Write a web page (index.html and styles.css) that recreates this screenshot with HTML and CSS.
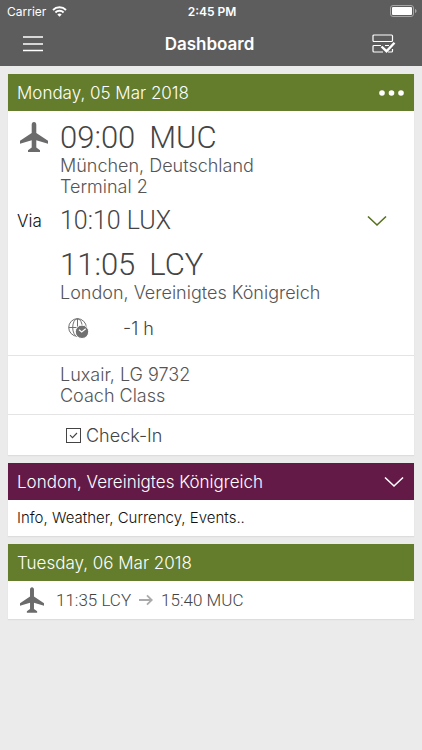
FILE: index.html
```html
<!DOCTYPE html>
<html lang="en">
<head>
    <meta charset="UTF-8">
    <meta name="viewport" content="width=device-width, initial-scale=1.0">
    <title>Dashboard</title>
    <link rel="stylesheet" href="styles.css">
</head>
<body>
    <!-- Shared icons -->
    <svg class="sprite" aria-hidden="true">
        <symbol id="plane" viewBox="0 0 28 30">
            <path d="M14 0c-1.500 0-2.300 1.300-2.300 2.800v8.200L0 18.800v3l11.700-3.600v7.300L8 28.200V30h12v-1.800l-3.700-2.700v-7.300L28 21.800v-3L16.300 11V2.800C16.300 1.300 15.500 0 14 0z"/>
        </symbol>
        <symbol id="chevron" viewBox="0 0 20 12">
            <path d="M1 1.500l9 8.500 9-8.500" fill="none" stroke="currentColor" stroke-width="1.600"/>
        </symbol>
    </svg>

    <header class="top">
        <div class="status-bar">
            <span class="carrier">
                Carrier
                <svg width="15" height="11" viewBox="0 0 15 11" fill="none" stroke="#fff" stroke-width="1.900">
                    <path d="M1 4a9.200 9.200 0 0 1 13 0M3.400 6.500a5.800 5.800 0 0 1 8.200 0"/>
                    <path d="M7.500 10.800L5.300 8.500a3.200 3.200 0 0 1 4.400 0z" fill="#fff" stroke="none"/>
                </svg>
            </span>
            <span class="clock">2:45 PM</span>
            <svg class="battery" width="27" height="12" viewBox="0 0 27 12">
                <rect x=".5" y=".5" width="23" height="11" rx="2.500" fill="none" stroke="#a5a5a5"/>
                <rect x="2" y="2" width="20" height="8" rx="1" fill="#fff"/>
                <path d="M25 4c2 .5 2 3.500 0 4z" fill="#a5a5a5"/>
            </svg>
        </div>
        <div class="nav-bar">
            <button class="icon-button" aria-label="Menu">
                <svg width="20" height="16" viewBox="0 0 20 16" stroke="#fff" stroke-width="1.500">
                    <path d="M0 1h20M0 8h20M0 14.500h20"/>
                </svg>
            </button>
            <h1>Dashboard</h1>
            <button class="icon-button" aria-label="Select entries">
                <svg width="24" height="20" viewBox="0 0 24 20" fill="none" stroke="#fff" stroke-width="1.200">
                    <rect x="1" y="1" width="19.500" height="6.500" rx="1"/>
                    <path d="M9 11.500H2a1 1 0 0 0-1 1V17a1 1 0 0 0 1 1h9M16 18h3.500a1 1 0 0 0 1-1v-2M13 11.500h4"/>
                    <path d="M9.500 12.500l5 4.700 8-8.500" stroke-width="2.400"/>
                </svg>
            </button>
        </div>
    </header>

    <main class="cards">
        <section class="card">
            <div class="card-header green">
                <h2>Monday, 05 Mar 2018</h2>
                <button class="icon-button" aria-label="More">
                    <svg class="dots" width="26" height="6" viewBox="0 0 26 6" fill="#fff">
                        <circle cx="4" cy="3" r="2.800"/>
                        <circle cx="13.500" cy="3" r="2.800"/>
                        <circle cx="23" cy="3" r="2.800"/>
                    </svg>
                </button>
            </div>
            <div class="flight">
                <svg class="plane" width="28" height="30"><use href="#plane"/></svg>
                <div class="stop">
                    <p class="stop-time"><span>09:00</span><span>MUC</span></p>
                    <p class="place">München, Deutschland<br>Terminal 2</p>
                </div>
                <span class="via-label">Via</span>
                <div class="via">
                    <span>10:10 LUX</span>
                    <button class="icon-button" aria-label="Show stopover">
                        <svg width="20" height="12"><use href="#chevron"/></svg>
                    </button>
                </div>
                <div class="stop arrival">
                    <p class="stop-time"><span>11:05</span><span>LCY</span></p>
                    <p class="place">London, Vereinigtes Königreich</p>
                </div>
                <div class="time-shift">
                    <svg width="21" height="21" viewBox="0 0 21 21" fill="none" stroke="#707070">
                        <circle cx="9.500" cy="9.500" r="8.800"/>
                        <ellipse cx="9.500" cy="9.500" rx="4.800" ry="8.800"/>
                        <path d="M9.500 .7v17.600M.7 9.500h17.600"/>
                        <circle cx="14" cy="13.800" r="6.700" fill="#707070" stroke="#fff"/>
                        <path d="M11 11.800l2.700 2.200 4-3.200" stroke="#fff" stroke-width="1.200"/>
                    </svg>
                    <span>-1 h</span>
                </div>
            </div>
            <p class="carrier-info place">Luxair, LG 9732<br>Coach Class</p>
            <a class="check-in" href="#check-in">
                <svg width="15" height="15" viewBox="0 0 15 15" fill="none" stroke="#444">
                    <rect x=".5" y=".5" width="14" height="14"/>
                    <path d="M4 7.200l2.500 2.500 4.500-4.700" stroke-width="1.100"/>
                </svg>
                Check-In
            </a>
        </section>

        <section class="card">
            <div class="card-header purple">
                <h2>London, Vereinigtes Königreich</h2>
                <button class="icon-button" aria-label="Expand">
                    <svg width="20" height="12"><use href="#chevron"/></svg>
                </button>
            </div>
            <p class="info">Info, Weather, Currency, Events..</p>
        </section>

        <section class="card">
            <div class="card-header green">
                <h2>Tuesday, 06 Mar 2018</h2>
            </div>
            <div class="summary">
                <svg class="plane" width="24" height="26"><use href="#plane"/></svg>
                <span>11:35 LCY</span>
                <svg class="arrow" width="14" height="12" viewBox="0 0 14 12" fill="none" stroke="#aaa" stroke-width="1.800">
                    <path d="M0 6h12.500M8 1.300L12.800 6 8 10.700"/>
                </svg>
                <span>15:40 MUC</span>
            </div>
        </section>
    </main>
</body>
</html>
```

FILE: styles.css
```css
* {
    box-sizing: border-box;
}

body {
    margin: 0;
    background-color: #ebebeb;
    color: #444;
    font-family: Inter, "Liberation Sans", sans-serif;
    font-size: 18px;
    font-weight: 300;
}

h1, h2, p {
    margin: 0;
}

svg {
    display: block;
    flex: none;
}

.sprite {
    position: absolute;
    width: 0;
    height: 0;
}

.icon-button {
    display: flex;
    padding: 0;
    border: none;
    background: none;
    color: inherit;
    cursor: pointer;
}

.top {
    background-color: #5d5d5d;
    color: #fff;
}

.status-bar,
.nav-bar {
    display: grid;
    grid-template-columns: 1fr auto 1fr;
    align-items: center;
}

.status-bar {
    height: 22px;
    padding: 0 5px 0 7px;
    font-size: 12px;
    font-weight: 400;
}

.carrier {
    display: flex;
    align-items: center;
    gap: 6px;
}

.clock {
    font-weight: 600;
}

.battery {
    justify-self: end;
}

.nav-bar {
    height: 44px;
    padding: 0 26px 0 23px;
}

.nav-bar h1 {
    font-size: 17px;
    font-weight: 600;
}

.nav-bar .icon-button:last-child {
    justify-self: end;
}

.cards {
    display: flex;
    flex-direction: column;
    gap: 8px;
    padding: 8px;
}

.card {
    background-color: #fff;
    box-shadow: 0 1px 1px #ddd;
}

.card-header {
    display: flex;
    align-items: center;
    justify-content: space-between;
    height: 37px;
    padding: 0 10px 0 9px;
    color: #fff;
}

.card-header h2 {
    font-size: 17px;
    font-weight: 300;
}

.green {
    background-color: #637d2c;
}

.purple {
    background-color: #631a47;
}

.plane {
    fill: #6b6b6b;
}

.flight {
    display: grid;
    grid-template-columns: 52px 1fr;
    padding: 9px 0 16px;
}

.flight .plane {
    margin: 2px 0 0 12px;
}

.stop-time,
.via,
.summary {
    font-family: Roboto, "Liberation Sans", sans-serif;
}

.stop-time {
    display: flex;
    gap: 14px;
    font-size: 31px;
    line-height: 35px;
}

.place {
    color: #555;
    line-height: 21px;
}

.via-label {
    padding-left: 9px;
    color: #111;
    font-size: 17px;
    line-height: 48px;
}

.via {
    display: flex;
    align-items: center;
    justify-content: space-between;
    padding-right: 27px;
    font-size: 25px;
    line-height: 48px;
}

.via .icon-button {
    color: #56701d;
}

.arrival,
.time-shift {
    grid-column: 2;
}

.arrival {
    padding-top: 2px;
}

.time-shift {
    display: flex;
    align-items: center;
    gap: 34px;
    padding: 15px 0 0 8px;
}

.carrier-info {
    padding: 8px 0 8px 52px;
    border-top: 1px solid #e4e4e4;
}

.check-in {
    display: flex;
    align-items: center;
    gap: 5px;
    height: 41px;
    padding-left: 58px;
    border-top: 1px solid #e4e4e4;
    color: inherit;
    text-decoration: none;
}

.info {
    padding-left: 9px;
    color: #111;
    font-size: 15px;
    line-height: 36px;
}

.summary {
    display: flex;
    align-items: center;
    gap: 8px;
    height: 38px;
    padding-left: 12px;
    font-size: 17px;
}

.summary .plane {
    margin-right: 4px;
}
```
